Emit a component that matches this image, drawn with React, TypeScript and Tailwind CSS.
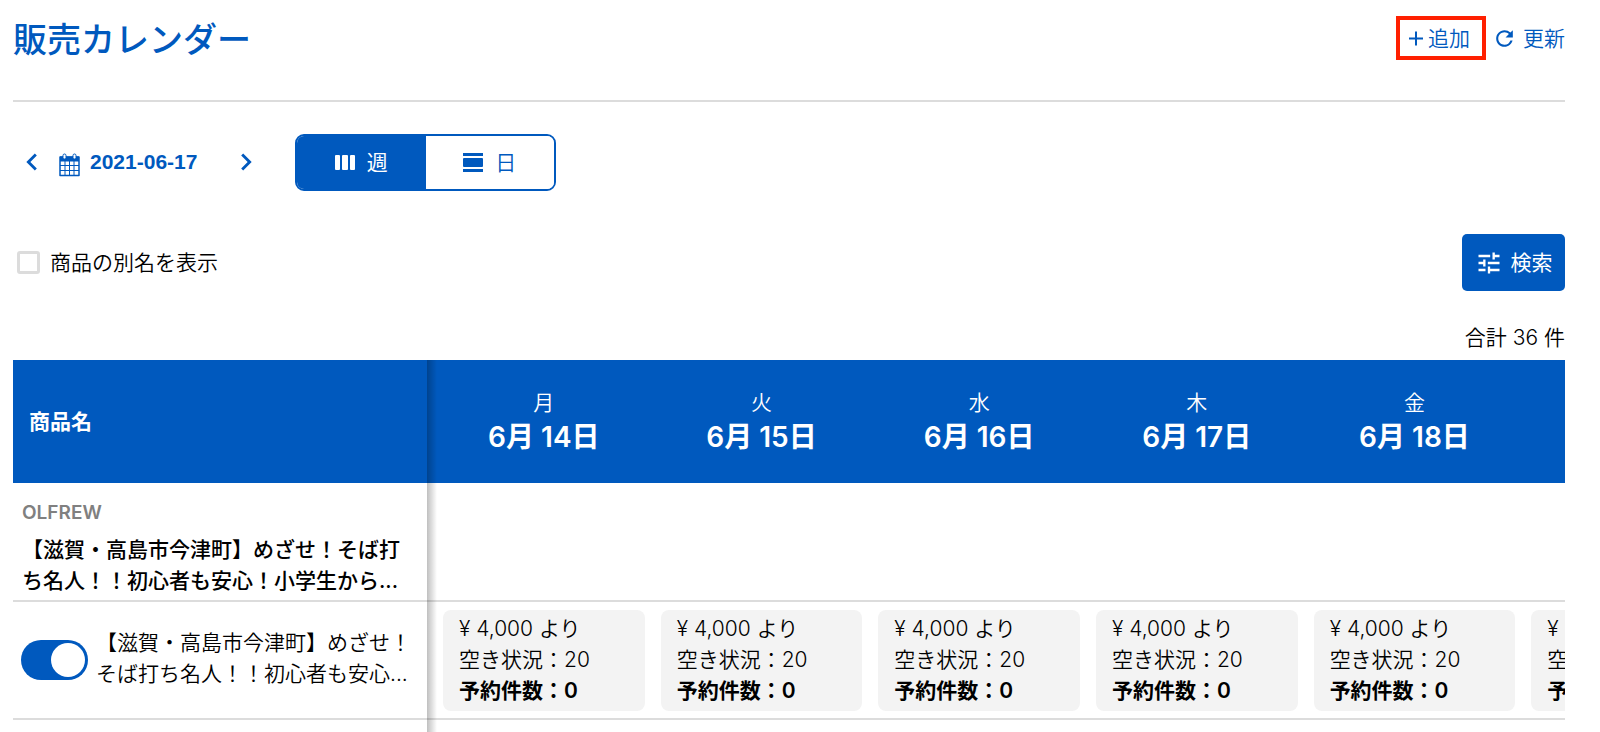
import React, { useState } from 'react';
import { MdChevronLeft, MdChevronRight, MdRefresh, MdTune } from 'react-icons/md';

type View = 'week' | 'day';

const DAYS = [
  { weekday: '月', date: '6月 14日' },
  { weekday: '火', date: '6月 15日' },
  { weekday: '水', date: '6月 16日' },
  { weekday: '木', date: '6月 17日' },
  { weekday: '金', date: '6月 18日' },
  { weekday: '土', date: '6月 19日' },
];

const CalendarIcon: React.FC = () => (
  <svg width="21" height="24" viewBox="0 0 21 24" fill="none" aria-hidden="true">
    <path d="M1 4h19v18.5H1z" stroke="#0059be" strokeWidth="1.5" strokeLinejoin="round" />
    <path d="M1 3.5h19v5H1z" fill="#0059be" />
    <path d="M1 12.5h19M1 17.5h19M6 7.5v15M10.5 7.5v15M15 7.5v15" stroke="#0059be" strokeWidth="1" />
    <rect x="4" y="1" width="3" height="5" rx="1.5" fill="#fff" stroke="#0059be" />
    <rect x="14" y="1" width="3" height="5" rx="1.5" fill="#fff" stroke="#0059be" />
  </svg>
);

const WeekIcon: React.FC = () => (
  <svg width="20" height="15" viewBox="0 0 20 15" fill="currentColor" aria-hidden="true">
    <rect width="5" height="15" rx="1" />
    <rect x="7" width="6" height="15" rx="1" />
    <rect x="15" width="5" height="15" rx="1" />
  </svg>
);

const DayIcon: React.FC = () => (
  <svg width="20" height="19" viewBox="0 0 20 19" fill="currentColor" aria-hidden="true">
    <rect width="20" height="3" />
    <rect y="5" width="20" height="9" rx="1" />
    <rect y="16" width="20" height="3" />
  </svg>
);

const PlusIcon: React.FC = () => (
  <svg width="16" height="16" viewBox="0 0 16 16" aria-hidden="true">
    <path d="M1 8.5h14M8 1.5v14" stroke="currentColor" strokeWidth="2" />
  </svg>
);

export default function App() {
  const [view, setView] = useState<View>('week');
  const [showAlias, setShowAlias] = useState(false);
  const [enabled, setEnabled] = useState(true);

  return (
    <div
      lang="ja"
      className="flex h-screen flex-col overflow-hidden bg-white pl-[13px] pr-[35px] font-['Inter','Noto_Sans_CJK_JP',sans-serif] text-[21px] leading-[31px] text-black"
    >
      <header className="flex h-[102px] shrink-0 items-start justify-between border-b-2 border-[#dcdcdc] pt-4 text-[#0059be]">
        <h1 className="text-[34px] font-medium leading-[48px]">販売カレンダー</h1>
        <div className="flex items-center gap-1.5 font-[350]">
          <button type="button" className="flex h-11 w-[90px] items-center gap-1 border-4 border-[#ff2000] px-2">
            <PlusIcon />
            <span className="shrink-0">追加</span>
          </button>
          <button type="button" className="flex items-center gap-1.5">
            <MdRefresh size={25} />
            更新
          </button>
        </div>
      </header>

      {/* Date navigation and view switch */}
      <div className="mt-8 flex shrink-0 items-center">
        <div className="flex w-[282px] items-center pb-0.5 pl-0.5 text-[#0059be]">
          <button type="button" aria-label="前の週" className="mr-2.5">
            <MdChevronLeft size={34} />
          </button>
          <button type="button" className="flex items-end gap-2.5 font-['Liberation_Sans',sans-serif] font-bold">
            <CalendarIcon />
            2021-06-17
          </button>
          <button type="button" aria-label="次の週" className="ml-8">
            <MdChevronRight size={34} />
          </button>
        </div>
        <div className="flex h-[57px] w-[261px] overflow-hidden rounded-[9px] border-2 border-[#0059be]">
          <button
            type="button"
            aria-pressed={view === 'week'}
            onClick={() => setView('week')}
            className={`flex flex-1 items-center justify-center gap-3 ${view === 'week' ? 'bg-[#0059be] text-white' : 'bg-white text-[#0059be]'}`}
          >
            <WeekIcon />
            週
          </button>
          <button
            type="button"
            aria-pressed={view === 'day'}
            onClick={() => setView('day')}
            className={`flex flex-1 items-center justify-center gap-3 font-[350] ${view === 'day' ? 'bg-[#0059be] text-white' : 'bg-white text-[#0059be]'}`}
          >
            <DayIcon />
            日
          </button>
        </div>
      </div>

      <div className="mt-[43px] flex shrink-0 items-center justify-between">
        <label className="flex items-center gap-2.5 pl-1 font-[350]">
          <input
            type="checkbox"
            checked={showAlias}
            onChange={(e) => setShowAlias(e.target.checked)}
            className="size-[23px] appearance-none rounded-[3px] border-[3px] border-[#dcdcdc] bg-white checked:bg-[#0059be]"
          />
          商品の別名を表示
        </label>
        <button type="button" className="flex h-[57px] w-[103px] items-center justify-center gap-2 rounded-[5px] bg-[#0059be] text-white">
          <MdTune size={28} />
          検索
        </button>
      </div>

      <p className="mt-[31px] mb-[7px] shrink-0 text-right font-[350]">合計 36 件</p>

      <div className="relative min-h-0 flex-1">
        <div className="h-full overflow-x-auto overflow-y-hidden [scrollbar-width:none]">
          <table className="w-[1728px] table-fixed border-collapse">
            <thead>
              <tr className="h-[123px] bg-[#0059be] text-white">
                <th scope="col" className="w-[422px] px-4 text-left font-bold">商品名</th>
                {DAYS.map((day) => (
                  <th key={day.date} scope="col" className="p-0 text-center">
                    <span className="block font-[350]">{day.weekday}</span>
                    <span className="block text-[28px] font-semibold leading-[38px]">{day.date}</span>
                  </th>
                ))}
              </tr>
            </thead>
            <tbody>
              <tr className="h-[118px] border-b-2 border-[#dcdcdc]">
                <th scope="row" className="pl-[9px] pt-3.5 text-left align-top font-medium">
                  <span className="mb-1.5 block text-[19px] font-semibold text-[#808080]">OLFREW</span>
                  【滋賀・高島市今津町】めざせ！そば打
                  <br />
                  ち名人！！初心者も安心！小学生から...
                </th>
                <td colSpan={6} />
              </tr>
              <tr className="h-[118px] border-b-2 border-[#dcdcdc]">
                <th scope="row" className="pl-2 text-left font-[350]">
                  <label className="flex items-center gap-2">
                    <input
                      type="checkbox"
                      role="switch"
                      checked={enabled}
                      onChange={(e) => setEnabled(e.target.checked)}
                      className="flex h-10 w-[67px] shrink-0 appearance-none items-center rounded-full bg-[#c4c4c4] px-[3px] before:size-[34px] before:rounded-full before:bg-white checked:justify-end checked:bg-[#0059be]"
                    />
                    <span className="pb-1">
                      【滋賀・高島市今津町】めざせ！
                      <br />
                      そば打ち名人！！初心者も安心...
                    </span>
                  </label>
                </th>
                {DAYS.map((day) => (
                  <td key={day.date} className="px-2 py-0">
                    <div className="rounded-lg bg-[#f3f3f3] px-4 pt-[3px] pb-[5px] font-[350]">
                      <p>¥ 4,000 より</p>
                      <p>空き状況：20</p>
                      <p className="font-semibold">予約件数：0</p>
                    </div>
                  </td>
                ))}
              </tr>
            </tbody>
          </table>
        </div>
        <div className="pointer-events-none absolute inset-y-0 left-[414px] w-2.5 bg-gradient-to-r from-black/25 to-transparent" />
      </div>
    </div>
  );
}
